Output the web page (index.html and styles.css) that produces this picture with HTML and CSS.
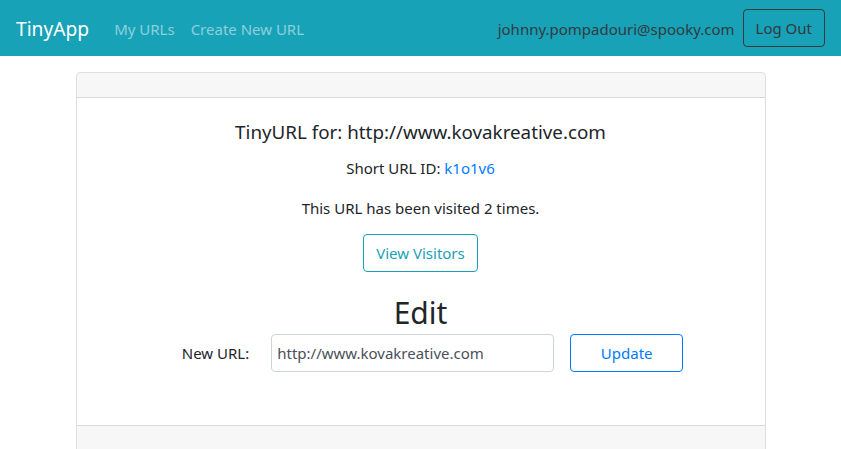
FILE: index.html
```html
<!DOCTYPE html>
<html>
<head>
<meta charset="utf-8">
<link rel="stylesheet" href="styles.css">
</head>
<body>
<nav class="navbar">
  <a class="brand">TinyApp</a>
  <div class="nav-links">
    <a class="nav-link">My URLs</a>
    <a class="nav-link">Create New URL</a>
  </div>
  <div class="nav-right">
    <span class="user">johnny.pompadouri@spooky.com</span>
    <button class="btn btn-dark-outline">Log Out</button>
  </div>
</nav>
<main class="container">
  <div class="card">
    <div class="card-header"></div>
    <div class="card-body">
      <h5 class="title">TinyURL for: http://www.kovakreative.com</h5>
      <p class="line">Short URL ID: <a class="link">k1o1v6</a></p>
      <p class="line last">This URL has been visited 2 times.</p>
      <button class="btn btn-info-outline">View Visitors</button>
      <h2 class="edit">Edit</h2>
      <form class="form-row">
        <label class="label">New URL:</label>
        <input class="input" type="text" value="http://www.kovakreative.com">
        <button class="btn btn-primary-outline" type="button">Update</button>
      </form>
    </div>
    <div class="card-footer"></div>
  </div>
</main>
</body>
</html>
```

FILE: styles.css
```css
* { box-sizing: border-box; }
html, body { margin: 0; padding: 0; }
body {
  font-family: "Noto Sans", "Open Sans", sans-serif;
  font-size: 15px;
  line-height: 24px;
  color: #212529;
  background: #fff;
  overflow: hidden;
}
.navbar {
  height: 56px;
  background: #17a2b8;
  display: flex;
  align-items: center;
  padding: 0 16px;
}
.brand {
  color: #fff;
  font-size: 19.2px;
  margin-right: 17px;
  padding-top: 2px;
}
.nav-links { display: flex; padding-top: 2px; }
.nav-link {
  color: rgba(255,255,255,.5);
  padding: 8px;
}
.nav-right {
  margin-left: auto;
  display: flex;
  align-items: center;
}
.user { color: #343a40; margin-right: 8px; padding-top: 2px; }
.btn {
  font-family: inherit;
  font-size: 15px;
  line-height: 24px;
  padding: 6px 12px;
  border-radius: 4px;
  background: transparent;
  border: 1px solid;
}
.btn-dark-outline { color: #343a40; border-color: #343a40; height: 38px; }
.container {
  width: 720px;
  margin: 16px auto 0;
  padding: 0 15px;
}
.card {
  border: 1px solid rgba(0,0,0,.125);
  border-radius: 4px;
  overflow: hidden;
}
.card-header {
  height: 25px;
  background: rgba(0,0,0,.03);
  border-bottom: 1px solid rgba(0,0,0,.125);
}
.card-footer {
  height: 40px;
  background: rgba(0,0,0,.03);
  border-top: 1px solid rgba(0,0,0,.125);
}
.card-body {
  padding: 22px 20px 53px;
  text-align: center;
}
.title {
  font-size: 18.8px;
  font-weight: 400;
  line-height: 24px;
  margin: 0 0 12px;
}
.line { margin: 0 0 16px; }
.line.last { margin-bottom: 14px; }
.link { color: #007bff; }
.btn-info-outline { color: #17a2b8; border-color: #17a2b8; height: 38px; }
.edit {
  font-size: 30px;
  font-weight: 400;
  line-height: 38px;
  margin: 22px 0 2px;
}
.form-row {
  display: flex;
  align-items: center;
  justify-content: center;
  padding-left: 24px;
}
.label { margin-right: 22px; }
.input {
  width: 283px;
  height: 38px;
  font-family: inherit;
  font-size: 15px;
  color: #495057;
  padding: 6px 5px;
  border: 1px solid #ced4da;
  border-radius: 4px;
  margin-right: 16px;
}
.btn-primary-outline {
  color: #007bff;
  border-color: #007bff;
  width: 113px;
  height: 38px;
}
```
